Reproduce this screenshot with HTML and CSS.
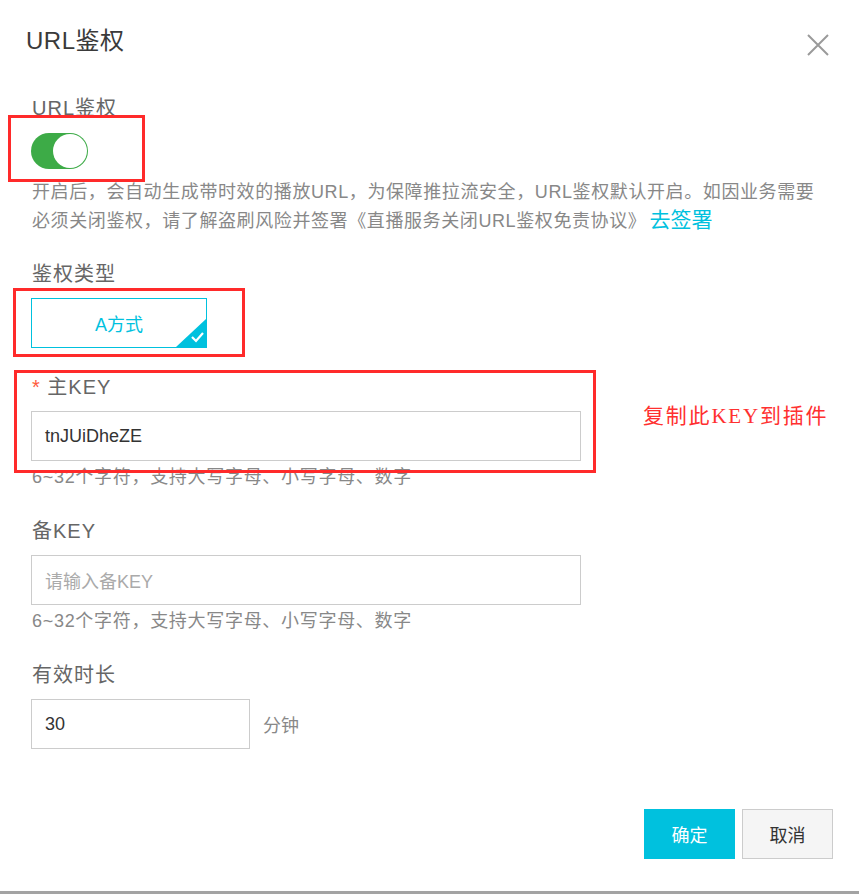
FILE: index.html
```html
<!DOCTYPE html>
<html lang="zh-CN">
<head>
<meta charset="utf-8">
<title>URL鉴权</title>
<link rel="stylesheet" href="styles.css">
</head>
<body>
<div class="dialog">
  <div class="header">
    <div class="title">URL鉴权</div>
    <svg class="close" width="22" height="22" viewBox="0 0 22 22"><path d="M1 1 L21 21 M21 1 L1 21" stroke="#9a9a9a" stroke-width="2" fill="none"/></svg>
  </div>
  <div class="body">
    <div class="label lbl-first">URL鉴权</div>
    <div class="switch-wrap">
      <div class="switch"><span class="knob"></span></div>
      <div class="mark mark-switch"></div>
    </div>
    <p class="desc">开启后，会自动生成带时效的播放URL，为保障推拉流安全，URL鉴权默认开启。如因业务需要<br>必须关闭鉴权，请了解盗刷风险并签署《直播服务关闭URL鉴权免责协议》<a class="link">去签署</a></p>

    <div class="label lbl-type">鉴权类型</div>
    <div class="card-wrap">
      <div class="card">A方式
        <svg class="corner" width="30" height="28" viewBox="0 0 30 28"><path d="M30 0 L30 28 L0 28 Z" fill="#00c1de"/><path d="M16 18 L20 22 L27 14" stroke="#fff" stroke-width="2.2" fill="none"/></svg>
      </div>
      <div class="mark mark-card"></div>
    </div>

    <div class="key-field">
      <div class="label"><span class="req">*</span> 主KEY</div>
      <div class="input">tnJUiDheZE</div>
      <div class="mark mark-key"></div>
      <div class="note">复制此KEY到插件</div>
    </div>
    <div class="hint">6~32个字符，支持大写字母、小写字母、数字</div>

    <div class="label lbl-gap">备KEY</div>
    <div class="input placeholder">请输入备KEY</div>
    <div class="hint">6~32个字符，支持大写字母、小写字母、数字</div>

    <div class="label lbl-gap">有效时长</div>
    <div class="duration">
      <div class="input short">30</div>
      <span class="unit">分钟</span>
    </div>
  </div>
  <div class="footer">
    <button class="btn primary">确定</button>
    <button class="btn">取消</button>
  </div>
</div>
</body>
</html>
```
FILE: styles.css
```css
* { box-sizing: border-box; }
html, body { margin: 0; padding: 0; background: #fff; }
body {
  font-family: "Liberation Sans", "Noto Sans CJK SC", sans-serif;
  color: #666;
}
.dialog {
  width: 859px;
  height: 894px;
  display: flex;
  flex-direction: column;
  border-bottom: 3px solid #a3a3a3;
  background: #fff;
}
.header {
  display: flex;
  justify-content: space-between;
  align-items: center;
  padding: 24px 30px 0 26px;
  height: 58px;
}
.title {
  font-size: 24px;
  line-height: 34px;
  color: #3a3a3a;
  letter-spacing: 0.5px;
}
.close { margin-top: 8px; }
.body {
  padding: 0 0 0 32px;
  display: flex;
  flex-direction: column;
  align-items: flex-start;
}
.label {
  font-size: 20px;
  line-height: 28px;
  color: #666;
  letter-spacing: 1px;
}
.lbl-first { margin-top: 36px; }
.switch-wrap { position: relative; margin-top: 11px; margin-left: -1px; }
.switch {
  width: 57px;
  height: 36px;
  border-radius: 18px;
  background: #3dab47;
  position: relative;
}
.knob {
  position: absolute;
  right: 1px;
  top: 1px;
  width: 34px;
  height: 34px;
  border-radius: 50%;
  background: #fff;
}
.mark {
  position: absolute;
  border: 3px solid #ff2a2a;
  pointer-events: none;
}
.mark-switch { left: -23px; top: -18px; width: 137px; height: 67px; }
.desc {
  margin: 9px 0 0;
  font-size: 18px;
  line-height: 29px;
  height: 58px;
  color: #888;
  letter-spacing: 0.6px;
}
.link { color: #00c1de; font-size: 21px; line-height: 1; margin-left: 3px; letter-spacing: 0; }
.lbl-type { margin-top: 24px; }
.card-wrap { position: relative; margin-top: 10px; margin-left: -1px; }
.card {
  width: 176px;
  height: 50px;
  border: 1px solid #00c1de;
  color: #00c1de;
  font-size: 18px;
  display: flex;
  align-items: center;
  justify-content: center;
  position: relative;
  overflow: hidden;
}
.corner { position: absolute; right: 0; bottom: 0; }
.mark-card { left: -18px; top: -10px; width: 232px; height: 69px; }
.key-field { position: relative; margin-top: 25px; display: flex; flex-direction: column; }
.req { color: #ff5a3c; }
.input {
  margin-top: 10px;
  margin-left: -1px;
  width: 550px;
  height: 50px;
  border: 1px solid #ccc;
  padding: 0 13px;
  display: flex;
  align-items: center;
  font-size: 18px;
  color: #333;
  letter-spacing: 0;
}
.placeholder { color: #aaa; }
.mark-key { left: -18px; top: -3px; width: 582px; height: 103px; }
.note {
  position: absolute;
  left: 611px;
  top: 29px;
  font-family: "Liberation Serif", "Noto Sans CJK SC", serif;
  font-size: 21px;
  line-height: 28px;
  color: #ff3030;
  white-space: nowrap;
  letter-spacing: 1.8px;
}
.hint {
  margin-top: 4px;
  font-size: 18px;
  line-height: 24px;
  color: #888;
  letter-spacing: 0.7px;
}
.lbl-gap { margin-top: 28px; }
.duration { display: flex; align-items: center; }
.short { width: 219px; }
.unit { margin: 10px 0 0 13px; font-size: 18px; color: #888; }
.footer {
  margin-top: auto;
  display: flex;
  justify-content: flex-end;
  gap: 7px;
  padding: 0 26px 32px 0;
}
.btn {
  width: 91px;
  height: 50px;
  border: 1px solid #ccc;
  background: #f5f5f5;
  color: #333;
  font-family: "Liberation Sans", "Noto Sans CJK SC", sans-serif;
  font-size: 18px;
  padding: 0;
}
.btn.primary {
  background: #00c1de;
  border-color: #00c1de;
  color: #fff;
}
```
